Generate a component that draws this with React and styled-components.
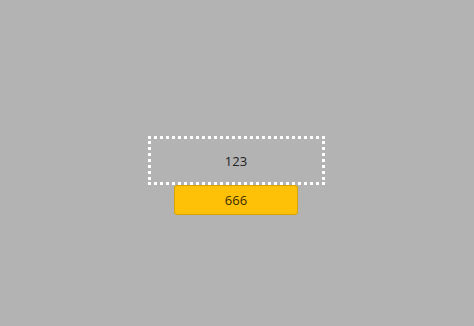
import styled, { createGlobalStyle } from 'styled-components'

const GlobalStyle = createGlobalStyle`
	html, body {
		margin: 0;
		padding: 0;
		background: #b3b3b3;
	}
	body {
		font-family: 'Open Sans', 'Noto Sans', sans-serif;
	}
`

const Page = styled.div`
	width: 100vw;
	height: 100vh;
	box-sizing: border-box;
	padding: 136px 2px 0 0;
	display: flex;
	flex-direction: column;
	align-items: center;
`

const DropZone = styled.div`
	width: 177px;
	height: 49px;
	box-sizing: border-box;
	border: 3px dotted #ffffff;
	display: flex;
	align-items: center;
	justify-content: center;
	font-size: 13px;
	color: #222;
`

const Tile = styled.div`
	width: 124px;
	height: 30px;
	box-sizing: border-box;
	background: #ffc107;
	border: 1px solid #d9a400;
	border-radius: 3px;
	display: flex;
	align-items: center;
	justify-content: center;
	font-size: 13px;
	color: #3a2a00;
`

export default function App() {
	return (
		<>
			<GlobalStyle />
			<Page>
				<DropZone>123</DropZone>
				<Tile>666</Tile>
			</Page>
		</>
	)
}
